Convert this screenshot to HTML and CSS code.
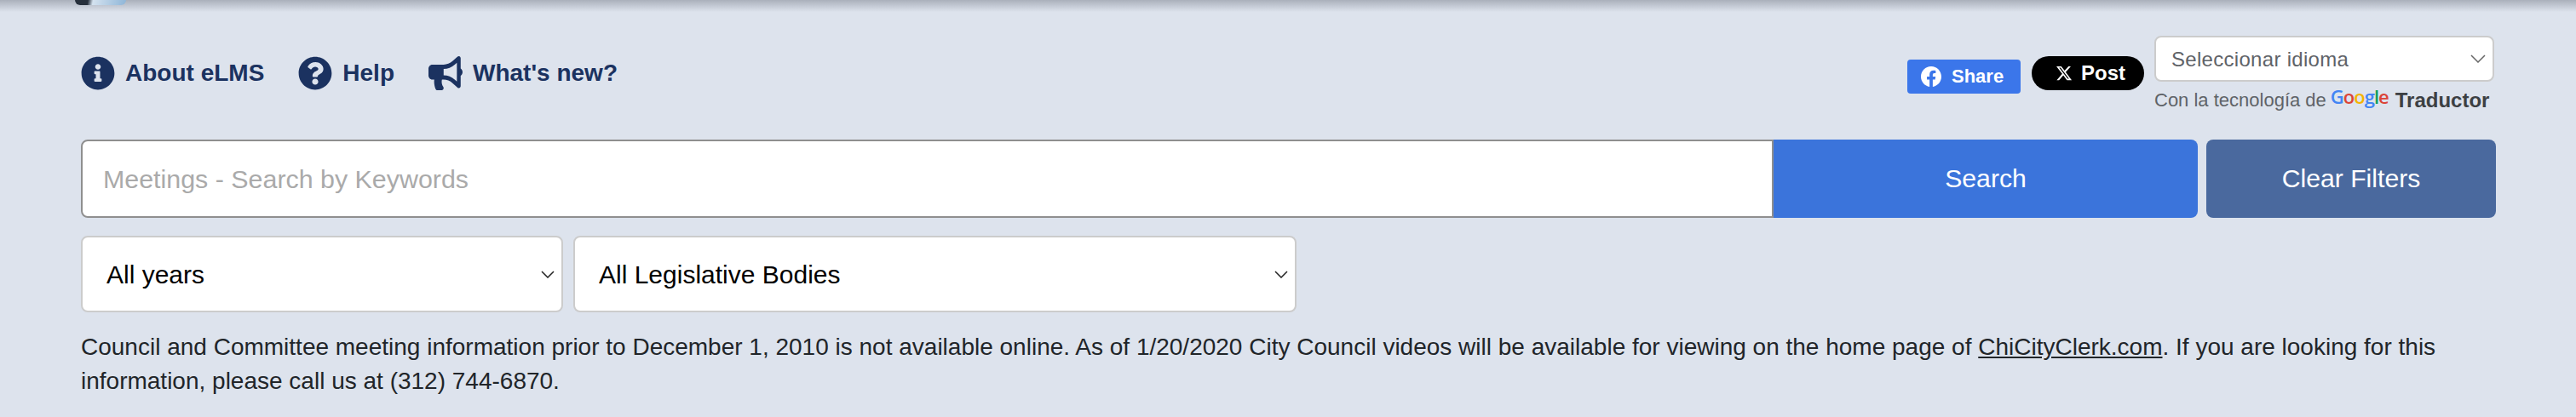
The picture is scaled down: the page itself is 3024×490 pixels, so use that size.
FILE: index.html
```html
<!DOCTYPE html>
<html lang="en">
<head>
    <meta charset="UTF-8">
    <meta name="viewport" content="width=device-width, initial-scale=1.0">
    <title>Meetings - eLMS</title>
    <link rel="stylesheet" href="styles.css">
</head>
<body>
    <div class="top-bar"><div class="logo-tip"></div></div>

    <div class="page">
        <div class="toolbar">
            <nav class="help-links">
                <a class="help-link" href="#">
                    <svg class="help-icon" viewBox="0 0 512 512"><path d="M256 8C119.043 8 8 119.083 8 256c0 136.997 111.043 248 248 248s248-111.003 248-248C504 119.083 392.957 8 256 8zm0 110c23.196 0 42 18.804 42 42s-18.804 42-42 42-42-18.804-42-42 18.804-42 42-42zm56 254c0 6.627-5.373 12-12 12h-88c-6.627 0-12-5.373-12-12v-24c0-6.627 5.373-12 12-12h12v-64h-12c-6.627 0-12-5.373-12-12v-24c0-6.627 5.373-12 12-12h64c6.627 0 12 5.373 12 12v100h12c6.627 0 12 5.373 12 12v24z"/></svg>
                    About eLMS
                </a>
                <a class="help-link" href="#">
                    <svg class="help-icon" viewBox="0 0 512 512"><path d="M504 256c0 136.997-111.043 248-248 248S8 392.997 8 256C8 119.083 119.043 8 256 8s248 111.083 248 248zM262.655 90c-54.497 0-89.255 22.957-116.549 63.758-3.536 5.286-2.353 12.415 2.715 16.258l34.699 26.31c5.205 3.947 12.621 3.008 16.665-2.122 17.864-22.658 30.113-35.797 57.303-35.797 20.429 0 45.698 13.148 45.698 32.958 0 14.976-12.363 22.667-32.534 33.976C247.128 238.528 216 254.941 216 296v4c0 6.627 5.373 12 12 12h56c6.627 0 12-5.373 12-12v-1.333c0-28.462 83.186-29.647 83.186-106.667 0-58.002-60.165-102-116.531-102zM256 338c-25.365 0-46 20.635-46 46 0 25.364 20.635 46 46 46s46-20.636 46-46c0-25.365-20.635-46-46-46z"/></svg>
                    Help
                </a>
                <a class="help-link" href="#">
                    <svg class="help-icon horn-icon" viewBox="0 0 576 512" preserveAspectRatio="none"><path d="M576 240c0-23.63-12.95-44.04-32-55.12V32.01C544 23.26 537.02 0 512 0c-7.12 0-14.19 2.38-19.98 7.02l-85.03 68.03C364.28 109.19 310.66 128 256 128H64c-35.35 0-64 28.65-64 64v96c0 35.35 28.65 64 64 64h33.7c-1.39 10.48-2.18 21.14-2.18 32 0 39.77 9.26 77.35 25.56 110.94 5.19 10.69 16.52 17.06 28.4 17.06h74.28c26.05 0 41.69-29.84 25.9-50.56-16.4-21.52-26.15-48.36-26.15-77.44 0-11.11 1.62-21.79 4.41-32H256c54.66 0 108.28 18.81 150.98 52.95l85.03 68.03a32.023 32.023 0 0 0 19.98 7.02c24.92 0 32-22.78 32-32V295.13C563.05 284.04 576 263.63 576 240zm-96 141.42l-33.05-26.44C392.95 311.78 325.12 288 256 288v-96c69.12 0 136.95-23.78 190.95-66.98L480 98.58v282.84z"/></svg>
                    What's new?
                </a>
            </nav>

            <div class="share-area">
                <a class="fb-share" href="#">
                    <svg class="fb-icon" viewBox="0 0 16 16"><path d="M16 8.049c0-4.446-3.582-8.05-8-8.05C3.58 0-.002 3.603-.002 8.05c0 4.017 2.926 7.347 6.75 7.95v-5.625h-2.03V8.05H6.75V6.275c0-2.017 1.195-3.131 3.022-3.131.876 0 1.791.157 1.791.157v1.98h-1.009c-.993 0-1.303.621-1.303 1.258v1.51h2.218l-.354 2.326H9.25V16c3.824-.604 6.75-3.934 6.75-7.951z"/></svg>
                    Share
                </a>
                <a class="x-post" href="#">
                    <svg class="x-icon" viewBox="0 0 24 24"><path d="M18.244 2.25h3.308l-7.227 8.26 8.502 11.24H16.17l-5.214-6.817L4.99 21.75H1.68l7.73-8.835L1.254 2.25H8.08l4.713 6.231zm-1.161 17.52h1.833L7.084 4.126H5.117z"/></svg>
                    Post
                </a>
                <div class="translate">
                    <select class="lang-select">
                        <option>Seleccionar idioma</option>
                    </select>
                    <div class="powered">
                        Con la tecnología de
                        <span class="google"><span class="g-blue">G</span><span class="g-red">o</span><span class="g-yellow">o</span><span class="g-blue">g</span><span class="g-green">l</span><span class="g-red">e</span></span>
                        <strong>Traductor</strong>
                    </div>
                </div>
            </div>
        </div>

        <form class="search-row">
            <input class="search-input" type="text" placeholder="Meetings - Search by Keywords">
            <button class="search-btn" type="button">Search</button>
            <button class="clear-btn" type="button">Clear Filters</button>
        </form>

        <div class="filter-row">
            <select class="filter filter-years"><option>All years</option></select>
            <select class="filter filter-bodies"><option>All Legislative Bodies</option></select>
        </div>

        <p class="notice">Council and Committee meeting information prior to December 1, 2010 is not available online. As of 1/20/2020 City Council videos will be available for viewing on the home page of <a href="#">ChiCityClerk.com</a>. If you are looking for this information, please call us at (312) 744-6870.</p>
    </div>
</body>
</html>
```

FILE: styles.css
```css
* {
    box-sizing: border-box;
}
body {
    margin: 0;
    height: 490px;
    overflow: hidden;
    font-family: "Liberation Sans", Arial, sans-serif;
    font-size: 28px;
    color: #212529;
    background-color: #dde3ed;
}
a {
    color: inherit;
    text-decoration: none;
}

.top-bar {
    position: relative;
    height: 14px;
    background: linear-gradient(#aab0bb, #dde3ed);
}
.logo-tip {
    position: absolute;
    left: 88px;
    top: 0;
    width: 60px;
    height: 6px;
    border-radius: 0 0 30px 30px;
    background: linear-gradient(100deg, #27303c 0 25%, #d4e2ef 35%, #8fb6d8 100%);
}

.page {
    padding: 28px 94px 0 95px;
}

.toolbar {
    display: flex;
    justify-content: space-between;
    align-items: flex-start;
    height: 122px;
}
.help-links {
    display: flex;
    gap: 40px;
    margin-top: 24px;
}
.help-link {
    display: flex;
    align-items: center;
    gap: 12px;
    height: 40px;
    font-size: 28px;
    font-weight: bold;
    color: #1b3260;
}
.help-icon {
    height: 40px;
    width: auto;
    fill: #1b3260;
}
.horn-icon {
    width: 40px;
}

.share-area {
    display: flex;
    align-items: flex-start;
    margin-right: 2px;
}
.fb-share {
    display: flex;
    align-items: center;
    gap: 12px;
    width: 133px;
    height: 40px;
    margin-top: 28px;
    padding-left: 16px;
    border-radius: 4px;
    font-size: 22px;
    font-weight: bold;
    color: white;
    background-color: #3b76ea;
}
.fb-icon {
    width: 24px;
    height: 24px;
    fill: white;
}
.x-post {
    display: flex;
    align-items: center;
    gap: 10px;
    width: 132px;
    height: 40px;
    margin: 24px 12px 0 13px;
    padding-left: 28px;
    border-radius: 20px;
    font-size: 24px;
    font-weight: bold;
    color: white;
    background-color: black;
}
.x-icon {
    width: 20px;
    height: 20px;
    fill: white;
}

.translate {
    width: 399px;
}
.lang-select {
    display: block;
    width: 399px;
    height: 54px;
    padding: 0 40px 0 18px;
    border: 2px solid #ccc;
    border-radius: 8px;
    appearance: none;
    font-family: "Liberation Sans", Arial, sans-serif;
    font-size: 24px;
    letter-spacing: 0.3px;
    color: #5f6368;
    background: white url("data:image/svg+xml,%3Csvg xmlns='http://www.w3.org/2000/svg' width='18' height='10'%3E%3Cpath d='M1 1l8 8 8-8' fill='none' stroke='%23666' stroke-width='1.5'/%3E%3C/svg%3E") no-repeat right 8px center;
}
.powered {
    display: flex;
    align-items: center;
    gap: 5px;
    margin-top: 8px;
    font-size: 22px;
    white-space: nowrap;
    color: #5f6368;
}
.powered strong {
    margin-left: 3px;
    font-size: 24px;
    color: #3c4043;
}
.google {
    font-family: "Open Sans", sans-serif;
    font-size: 22px;
    font-weight: 600;
    letter-spacing: -1px;
    margin-top: -10px;
}
.g-blue { color: #4285f4; }
.g-red { color: #db4437; }
.g-yellow { color: #f4b400; }
.g-green { color: #0f9d58; }

.search-row {
    display: flex;
    height: 92px;
    margin: 0;
}
.search-input {
    flex: 1;
    padding: 0 24px;
    border: 2px solid #8f8f8f;
    border-radius: 8px 0 0 8px;
    font-family: inherit;
    font-size: 30.4px;
    background: white;
}
.search-input::placeholder {
    color: #aaa;
}
.search-btn, .clear-btn {
    padding: 0;
    border: none;
    font-family: inherit;
    font-size: 30.2px;
    color: white;
    cursor: pointer;
}
.search-btn {
    width: 498px;
    border-radius: 0 8px 8px 0;
    background-color: #3b74db;
}
.clear-btn {
    width: 340px;
    margin-left: 10px;
    border-radius: 8px;
    background-color: #4a699e;
}

.filter-row {
    display: flex;
    gap: 12px;
    margin-top: 21px;
}
.filter {
    height: 90px;
    padding: 0 28px;
    border: 2px solid #ccc;
    border-radius: 8px;
    appearance: none;
    font-family: inherit;
    font-size: 30px;
    color: black;
    background: white url("data:image/svg+xml,%3Csvg xmlns='http://www.w3.org/2000/svg' width='16' height='9'%3E%3Cpath d='M1 1l7 7 7-7' fill='none' stroke='%23222' stroke-width='1.5'/%3E%3C/svg%3E") no-repeat right 8px center;
}
.filter-years {
    width: 566px;
}
.filter-bodies {
    width: 849px;
}

.notice {
    margin: 21px 0 0;
    line-height: 40px;
}
.notice a {
    text-decoration: underline;
}
```
